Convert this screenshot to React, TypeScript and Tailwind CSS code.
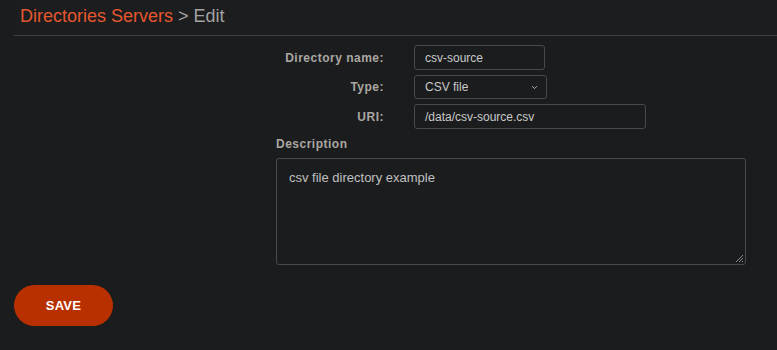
import { ChevronDown } from 'lucide-react'

export default function App() {
  return (
    <div className="w-[777px] h-[350px] bg-[#1b1c1e] font-['Liberation_Sans',Arial,sans-serif] overflow-hidden">
      <div className="ml-[14px] h-[36px] border-b border-[#3c3f42] bg-[#1c1d1f] flex items-center pl-[6px] pb-[2px]">
        <span className="text-[18px] text-[#e4572e]">Directories Servers</span>
        <span className="text-[18px] text-[#a3a3a3] ml-[5px]">&gt; Edit</span>
      </div>

      <div className="ml-[276px] w-[470px] mt-[9px] flex flex-col">
        <div className="flex flex-col gap-[5px]">
          <Row label="Directory name:">
            <div className="w-[131px] h-[25px] border border-[#48494c] rounded-[3px] flex items-center px-[10px] text-[12px] text-[#c9c9c9]">csv-source</div>
          </Row>
          <Row label="Type:">
            <div className="w-[133px] h-[24px] border border-[#48494c] rounded-[3px] flex items-center justify-between pl-[10px] pr-[7px] text-[12px] text-[#c9c9c9]">
              <span>CSV file</span>
              <ChevronDown size={9} strokeWidth={2.5} className="text-[#bbbbbb]" />
            </div>
          </Row>
          <Row label="URI:">
            <div className="w-[232px] h-[25px] border border-[#48494c] rounded-[3px] flex items-center px-[10px] text-[12px] text-[#c9c9c9]">/data/csv-source.csv</div>
          </Row>
        </div>
        <div className="mt-[6px] text-[12px] font-bold tracking-[0.5px] text-[#aaa7a2]">Description</div>
        <div className="mt-[5px] relative h-[107px] border border-[#48494c] rounded-[3px] px-[12px] py-[9px] text-[13px] text-[#c0c0c0]">
          csv file directory example
          <svg className="absolute right-[1px] bottom-[1px]" width="9" height="9" viewBox="0 0 9 9">
            <path d="M8 1L1 8M8 4L4 8M8 7L7 8" stroke="#8a8a8a" strokeWidth="1" />
          </svg>
        </div>
      </div>

      <button className="ml-[14px] mt-[20px] w-[99px] h-[41px] rounded-full bg-[#b83000] text-white text-[13px] font-bold tracking-[0.3px]">SAVE</button>
    </div>
  )
}

function Row({ label, children }: { label: string; children: React.ReactNode }) {
  return (
    <div className="flex items-center">
      <div className="w-[108px] text-right text-[12px] font-bold tracking-[0.5px] text-[#aaa7a2]">{label}</div>
      <div className="ml-[30px]">{children}</div>
    </div>
  )
}
